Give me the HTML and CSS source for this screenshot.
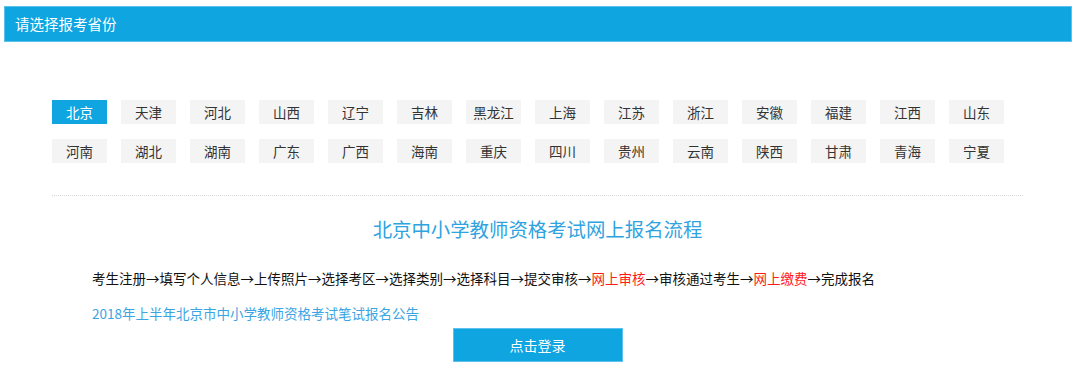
FILE: index.html
```html
<!DOCTYPE html>
<html lang="zh-CN">
<head>
    <meta charset="UTF-8">
    <title>请选择报考省份</title>
    <link rel="stylesheet" href="styles.css">
</head>
<body>

<header class="bar">请选择报考省份</header>

<main class="content">
    <div class="provinces">
        <a class="prov active">北京</a>
        <a class="prov">天津</a>
        <a class="prov">河北</a>
        <a class="prov">山西</a>
        <a class="prov">辽宁</a>
        <a class="prov">吉林</a>
        <a class="prov">黑龙江</a>
        <a class="prov">上海</a>
        <a class="prov">江苏</a>
        <a class="prov">浙江</a>
        <a class="prov">安徽</a>
        <a class="prov">福建</a>
        <a class="prov">江西</a>
        <a class="prov">山东</a>
        <a class="prov">河南</a>
        <a class="prov">湖北</a>
        <a class="prov">湖南</a>
        <a class="prov">广东</a>
        <a class="prov">广西</a>
        <a class="prov">海南</a>
        <a class="prov">重庆</a>
        <a class="prov">四川</a>
        <a class="prov">贵州</a>
        <a class="prov">云南</a>
        <a class="prov">陕西</a>
        <a class="prov">甘肃</a>
        <a class="prov">青海</a>
        <a class="prov">宁夏</a>
    </div>

    <div class="process">
        <h2 class="process-title">北京中小学教师资格考试网上报名流程</h2>
        <p class="steps">考生注册→填写个人信息→上传照片→选择考区→选择类别→选择科目→提交审核→<span class="hot">网上审核</span>→审核通过考生→<span class="hot">网上缴费</span>→完成报名</p>
        <a class="notice">2018年上半年北京市中小学教师资格考试笔试报名公告</a>
        <button class="login" type="button">点击登录</button>
    </div>
</main>

</body>
</html>
```

FILE: styles.css
```css
body {
    margin: 0;
    background: #fff;
    font-family: "Noto Sans CJK SC", "Liberation Sans", sans-serif;
    color: #333;
}

.bar {
    margin: 6px 8px 0 4px;
    height: 34px;
    line-height: 34px;
    padding-left: 10px;
    background-color: #0ea5e1;
    border: 1px solid #5cc2ec;
    color: #fff;
    font-size: 14.5px;
}

.content {
    width: 971px;
    margin-left: 52px;
}

.provinces {
    display: grid;
    grid-template-columns: repeat(14, 55px);
    column-gap: 14px;
    row-gap: 15px;
    margin-top: 58px;
}

.prov {
    height: 24px;
    line-height: 24px;
    text-align: center;
    background-color: #f4f4f4;
    color: #333;
    font-size: 13.5px;
}

.prov.active {
    background-color: #0ea5e1;
    color: #fff;
}

.process {
    margin-top: 32px;
    border-top: 1px dotted #d8d8d8;
    display: flex;
    flex-direction: column;
}

.process-title {
    margin: 18px 0 0;
    line-height: 30px;
    font-size: 19.4px;
    font-weight: normal;
    text-align: center;
    color: #2fa3e0;
}

.steps {
    margin: 24px 0 0 40px;
    line-height: 20px;
    font-size: 13.5px;
    color: #111;
}

.hot {
    color: #ff1a1a;
}

.notice {
    margin: 15px 0 0 40px;
    line-height: 20px;
    font-size: 13.5px;
    color: #3aa5e2;
}

.login {
    align-self: center;
    margin-top: 5px;
    width: 170px;
    height: 34px;
    background-color: #0ea5e1;
    border: 1px solid #5cc2ec;
    color: #fff;
    font-family: inherit;
    font-size: 14px;
    cursor: pointer;
}
```
